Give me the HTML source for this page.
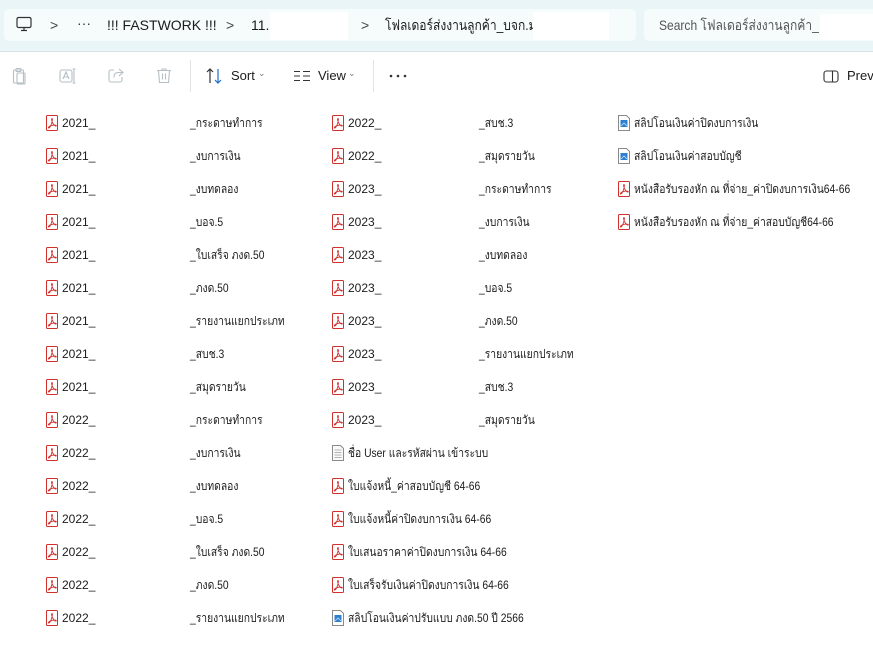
<!DOCTYPE html>
<html><head><meta charset="utf-8"><style>
*{margin:0;padding:0;box-sizing:border-box}
body{width:873px;height:660px;overflow:hidden;background:#fff;font-family:"Segoe UI","Liberation Sans","DejaVu Sans",sans-serif;color:#1b1b1b;position:relative}
#top{position:absolute;left:0;top:0;width:873px;height:52px;background:#eaf5f8;border-bottom:1px solid #d6e3e7}
.box{position:absolute;top:9px;height:32px;background:#f6fbfc;border-radius:5px}
.t{position:absolute;white-space:nowrap;font-size:14px;line-height:18px}
.f{position:absolute;white-space:nowrap;font-size:12px;line-height:16px}
.th{transform:scaleX(0.86);transform-origin:left center}
svg.i{position:absolute}
.tb{position:absolute;font-size:13px;color:#1b1b1b;white-space:nowrap}
</style></head><body>
<div id="top">
<div class="box" style="left:4px;width:632px"></div>
<div class="box" style="left:644px;width:240px"></div>
<svg class="i" style="left:16px;top:16px" width="16" height="16" viewBox="0 0 16 16"><rect x="1" y="1.5" width="14" height="10" rx="1.5" fill="none" stroke="#333" stroke-width="1.2"/><path d="M5 14.5h6M8 11.5v3" stroke="#333" stroke-width="1.2"/></svg>
<div class="t" style="left:50px;top:16px;color:#444">&gt;</div>
<div class="t" style="left:77px;top:14px;color:#333">···</div>
<div class="t" style="left:107px;top:16px">!!! FASTWORK !!!</div>
<div class="t" style="left:226px;top:16px;color:#444">&gt;</div>
<div class="t" style="left:251px;top:16px">11.ร</div>
<div style="position:absolute;left:270px;top:12px;width:78px;height:28px;background:#fff"></div>
<div class="t" style="left:361px;top:16px;color:#444">&gt;</div>
<div class="t th" style="left:385px;top:16px">โฟลเดอร์ส่งงานลูกค้า_บจก.ม</div>
<div style="position:absolute;left:533px;top:12px;width:76px;height:28px;background:#fff"></div>
<div class="t th" style="left:659px;top:16px;color:#555">Search โฟลเดอร์ส่งงานลูกค้า_</div>
<div style="position:absolute;left:820px;top:14px;width:53px;height:26px;background:#fff"></div>
</div>
<!-- toolbar -->
<svg class="i" style="left:12px;top:67px" width="16" height="18" viewBox="0 0 16 18" fill="none" stroke="#b5bfc4" stroke-width="1.1"><rect x="1.5" y="3" width="10" height="13" rx="1"/><rect x="5" y="6" width="8" height="11" rx="1"/><rect x="4" y="1.5" width="5" height="3" rx=".8"/></svg>
<svg class="i" style="left:59px;top:68px" width="18" height="16" viewBox="0 0 18 16" fill="none" stroke="#b5bfc4" stroke-width="1.1"><rect x="1" y="2" width="12" height="12" rx="2"/><path d="M4 11l3-7 3 7M5 9h4M15 1v14M13.5 1h3M13.5 15h3"/></svg>
<svg class="i" style="left:108px;top:67px" width="17" height="17" viewBox="0 0 17 17" fill="none" stroke="#b5bfc4" stroke-width="1.1"><path d="M6 3H3a2 2 0 0 0-2 2v8a2 2 0 0 0 2 2h9a2 2 0 0 0 2-2v-3"/><path d="M11 2l4 3.5-4 3.5M15 5.5H10a4 4 0 0 0-4 4v1"/></svg>
<svg class="i" style="left:156px;top:67px" width="16" height="17" viewBox="0 0 16 17" fill="none" stroke="#b5bfc4" stroke-width="1.1"><path d="M1 3.5h14M6 3.5V2h4v1.5M2.5 3.5l1 12h9l1-12M6.5 6.5v6M9.5 6.5v6"/></svg>
<div style="position:absolute;left:190px;top:60px;width:1px;height:32px;background:#e3e3e3"></div>
<svg class="i" style="left:206px;top:68px" width="18" height="16" viewBox="0 0 18 16" fill="none" stroke-width="1.2"><path d="M4 15V1M1 4l3-3 3 3" stroke="#333"/><path d="M12 1v14M9 12l3 3 3-3" stroke="#1e6fc9"/></svg>
<div class="tb" style="left:231px;top:68px">Sort</div><div class="tb" style="left:258px;top:68px;font-size:9px;color:#777">⌄</div>
<svg class="i" style="left:293px;top:70px" width="18" height="12" viewBox="0 0 18 12" stroke="#333" stroke-width="1"><path d="M1 1.5h6M1 6h6M1 10.5h6M10 1.5h7M10 6h7M10 10.5h7"/></svg>
<div class="tb" style="left:318px;top:68px">View</div><div class="tb" style="left:348px;top:68px;font-size:9px;color:#777">⌄</div>
<div style="position:absolute;left:373px;top:60px;width:1px;height:32px;background:#e3e3e3"></div>
<svg class="i" style="left:389px;top:74px" width="18" height="4" viewBox="0 0 18 4" fill="#333"><circle cx="2" cy="2" r="1.3"/><circle cx="9" cy="2" r="1.3"/><circle cx="16" cy="2" r="1.3"/></svg>
<svg class="i" style="left:823px;top:70px" width="16" height="13" viewBox="0 0 16 13" fill="none" stroke="#333" stroke-width="1.1"><rect x="1" y="1" width="14" height="11" rx="2.5"/><path d="M9.5 1v11"/></svg>
<div class="tb" style="left:847px;top:68px">Previ</div>

<svg width="0" height="0" style="position:absolute"><defs>
<symbol id="pdf" viewBox="0 0 12 16"><rect x=".5" y=".5" width="11" height="15" rx="1" fill="#fff" stroke="#d0312d"/><path d="M6 3.5c-.8 0-.5 2.5 1 5s3 3 3.3 2.3c.3-.8-2.5-1-5-.2S2 12.5 2.6 13c.6.5 2-1.5 2.8-4S6.8 3.5 6 3.5z" fill="none" stroke="#d0312d" stroke-width=".9"/></symbol>
<symbol id="txt" viewBox="0 0 12 16"><path d="M.5.5h8l3 3v12H.5z" fill="#fafafa" stroke="#8a8a8a"/><path d="M2.5 5h7M2.5 7.5h7M2.5 10h7M2.5 12.5h7" stroke="#999" stroke-width=".8"/></symbol>
<symbol id="img" viewBox="0 0 12 16"><path d="M.5.5h8l3 3v12H.5z" fill="#fff" stroke="#8a8a8a"/><rect x="2.5" y="5" width="7" height="7" fill="#2f7fd0"/><path d="M3 11l3-3 3 3" stroke="#bfe0ff" fill="none" stroke-width=".8"/></symbol>
</defs></svg>

<!-- column 1 -->
<svg class="i" style="left:46px;top:115px" width="12" height="16"><use href="#pdf"/></svg><div class="f" style="left:62px;top:115px">2021_</div><div class="f th" style="left:190px;top:115px">_กระดาษทำการ</div>
<svg class="i" style="left:46px;top:148px" width="12" height="16"><use href="#pdf"/></svg><div class="f" style="left:62px;top:148px">2021_</div><div class="f th" style="left:190px;top:148px">_งบการเงิน</div>
<svg class="i" style="left:46px;top:181px" width="12" height="16"><use href="#pdf"/></svg><div class="f" style="left:62px;top:181px">2021_</div><div class="f th" style="left:190px;top:181px">_งบทดลอง</div>
<svg class="i" style="left:46px;top:214px" width="12" height="16"><use href="#pdf"/></svg><div class="f" style="left:62px;top:214px">2021_</div><div class="f th" style="left:190px;top:214px">_บอจ.5</div>
<svg class="i" style="left:46px;top:247px" width="12" height="16"><use href="#pdf"/></svg><div class="f" style="left:62px;top:247px">2021_</div><div class="f th" style="left:190px;top:247px">_ใบเสร็จ ภงด.50</div>
<svg class="i" style="left:46px;top:280px" width="12" height="16"><use href="#pdf"/></svg><div class="f" style="left:62px;top:280px">2021_</div><div class="f th" style="left:190px;top:280px">_ภงด.50</div>
<svg class="i" style="left:46px;top:313px" width="12" height="16"><use href="#pdf"/></svg><div class="f" style="left:62px;top:313px">2021_</div><div class="f th" style="left:190px;top:313px">_รายงานแยกประเภท</div>
<svg class="i" style="left:46px;top:346px" width="12" height="16"><use href="#pdf"/></svg><div class="f" style="left:62px;top:346px">2021_</div><div class="f th" style="left:190px;top:346px">_สบช.3</div>
<svg class="i" style="left:46px;top:379px" width="12" height="16"><use href="#pdf"/></svg><div class="f" style="left:62px;top:379px">2021_</div><div class="f th" style="left:190px;top:379px">_สมุดรายวัน</div>
<svg class="i" style="left:46px;top:412px" width="12" height="16"><use href="#pdf"/></svg><div class="f" style="left:62px;top:412px">2022_</div><div class="f th" style="left:190px;top:412px">_กระดาษทำการ</div>
<svg class="i" style="left:46px;top:445px" width="12" height="16"><use href="#pdf"/></svg><div class="f" style="left:62px;top:445px">2022_</div><div class="f th" style="left:190px;top:445px">_งบการเงิน</div>
<svg class="i" style="left:46px;top:478px" width="12" height="16"><use href="#pdf"/></svg><div class="f" style="left:62px;top:478px">2022_</div><div class="f th" style="left:190px;top:478px">_งบทดลอง</div>
<svg class="i" style="left:46px;top:511px" width="12" height="16"><use href="#pdf"/></svg><div class="f" style="left:62px;top:511px">2022_</div><div class="f th" style="left:190px;top:511px">_บอจ.5</div>
<svg class="i" style="left:46px;top:544px" width="12" height="16"><use href="#pdf"/></svg><div class="f" style="left:62px;top:544px">2022_</div><div class="f th" style="left:190px;top:544px">_ใบเสร็จ ภงด.50</div>
<svg class="i" style="left:46px;top:577px" width="12" height="16"><use href="#pdf"/></svg><div class="f" style="left:62px;top:577px">2022_</div><div class="f th" style="left:190px;top:577px">_ภงด.50</div>
<svg class="i" style="left:46px;top:610px" width="12" height="16"><use href="#pdf"/></svg><div class="f" style="left:62px;top:610px">2022_</div><div class="f th" style="left:190px;top:610px">_รายงานแยกประเภท</div>
<!-- column 2 -->
<svg class="i" style="left:332px;top:115px" width="12" height="16"><use href="#pdf"/></svg><div class="f" style="left:348px;top:115px">2022_</div><div class="f th" style="left:479px;top:115px">_สบช.3</div>
<svg class="i" style="left:332px;top:148px" width="12" height="16"><use href="#pdf"/></svg><div class="f" style="left:348px;top:148px">2022_</div><div class="f th" style="left:479px;top:148px">_สมุดรายวัน</div>
<svg class="i" style="left:332px;top:181px" width="12" height="16"><use href="#pdf"/></svg><div class="f" style="left:348px;top:181px">2023_</div><div class="f th" style="left:479px;top:181px">_กระดาษทำการ</div>
<svg class="i" style="left:332px;top:214px" width="12" height="16"><use href="#pdf"/></svg><div class="f" style="left:348px;top:214px">2023_</div><div class="f th" style="left:479px;top:214px">_งบการเงิน</div>
<svg class="i" style="left:332px;top:247px" width="12" height="16"><use href="#pdf"/></svg><div class="f" style="left:348px;top:247px">2023_</div><div class="f th" style="left:479px;top:247px">_งบทดลอง</div>
<svg class="i" style="left:332px;top:280px" width="12" height="16"><use href="#pdf"/></svg><div class="f" style="left:348px;top:280px">2023_</div><div class="f th" style="left:479px;top:280px">_บอจ.5</div>
<svg class="i" style="left:332px;top:313px" width="12" height="16"><use href="#pdf"/></svg><div class="f" style="left:348px;top:313px">2023_</div><div class="f th" style="left:479px;top:313px">_ภงด.50</div>
<svg class="i" style="left:332px;top:346px" width="12" height="16"><use href="#pdf"/></svg><div class="f" style="left:348px;top:346px">2023_</div><div class="f th" style="left:479px;top:346px">_รายงานแยกประเภท</div>
<svg class="i" style="left:332px;top:379px" width="12" height="16"><use href="#pdf"/></svg><div class="f" style="left:348px;top:379px">2023_</div><div class="f th" style="left:479px;top:379px">_สบช.3</div>
<svg class="i" style="left:332px;top:412px" width="12" height="16"><use href="#pdf"/></svg><div class="f" style="left:348px;top:412px">2023_</div><div class="f th" style="left:479px;top:412px">_สมุดรายวัน</div>
<svg class="i" style="left:332px;top:445px" width="12" height="16"><use href="#txt"/></svg><div class="f th" style="left:348px;top:445px">ชื่อ User และรหัสผ่าน เข้าระบบ</div>
<svg class="i" style="left:332px;top:478px" width="12" height="16"><use href="#pdf"/></svg><div class="f th" style="left:348px;top:478px">ใบแจ้งหนี้_ค่าสอบบัญชี 64-66</div>
<svg class="i" style="left:332px;top:511px" width="12" height="16"><use href="#pdf"/></svg><div class="f th" style="left:348px;top:511px">ใบแจ้งหนี้ค่าปิดงบการเงิน 64-66</div>
<svg class="i" style="left:332px;top:544px" width="12" height="16"><use href="#pdf"/></svg><div class="f th" style="left:348px;top:544px">ใบเสนอราคาค่าปิดงบการเงิน 64-66</div>
<svg class="i" style="left:332px;top:577px" width="12" height="16"><use href="#pdf"/></svg><div class="f th" style="left:348px;top:577px">ใบเสร็จรับเงินค่าปิดงบการเงิน 64-66</div>
<svg class="i" style="left:332px;top:610px" width="12" height="16"><use href="#img"/></svg><div class="f th" style="left:348px;top:610px">สลิปโอนเงินค่าปรับแบบ ภงด.50 ปี 2566</div>
<!-- column 3 -->
<svg class="i" style="left:618px;top:115px" width="12" height="16"><use href="#img"/></svg><div class="f th" style="left:634px;top:115px">สลิปโอนเงินค่าปิดงบการเงิน</div>
<svg class="i" style="left:618px;top:148px" width="12" height="16"><use href="#img"/></svg><div class="f th" style="left:634px;top:148px">สลิปโอนเงินค่าสอบบัญชี</div>
<svg class="i" style="left:618px;top:181px" width="12" height="16"><use href="#pdf"/></svg><div class="f th" style="left:634px;top:181px">หนังสือรับรองหัก ณ ที่จ่าย_ค่าปิดงบการเงิน64-66</div>
<svg class="i" style="left:618px;top:214px" width="12" height="16"><use href="#pdf"/></svg><div class="f th" style="left:634px;top:214px">หนังสือรับรองหัก ณ ที่จ่าย_ค่าสอบบัญชี64-66</div>
</body></html>
